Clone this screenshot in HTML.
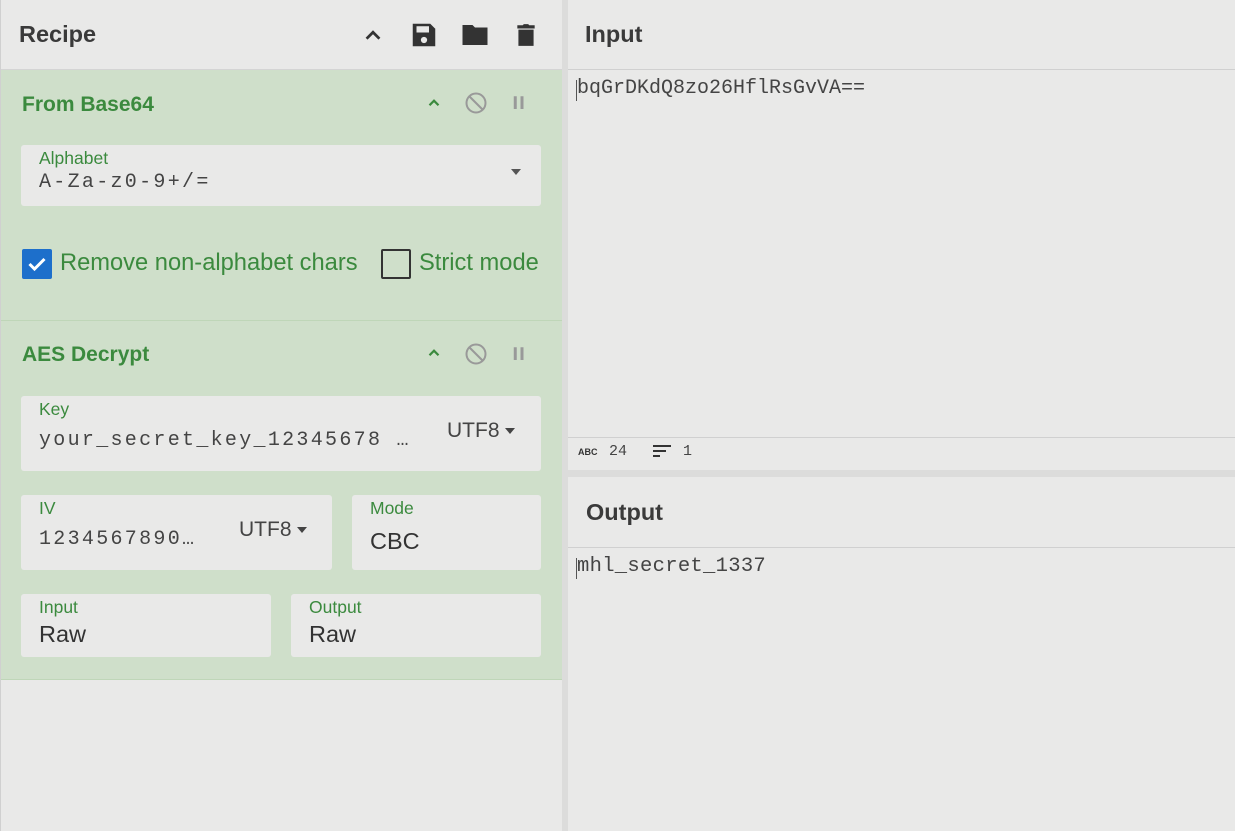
<!DOCTYPE html>
<html><head><style>
*{box-sizing:border-box;margin:0;padding:0}
body{width:1235px;height:831px;background:#e9e9e8;font-family:"Liberation Sans",sans-serif;position:relative;overflow:hidden;color:#333}
.a{position:absolute}
.h{font-weight:bold;font-size:23.5px;color:#3a3a3a}
.op{background:#cfdfca;border-bottom:1px solid #bfd6b8;left:1px;width:561px}
.t{color:#3b8a3e;font-weight:bold;font-size:21px}
.f{background:#e9e9e8;border-radius:3px}
.lab{font-size:17.5px;color:#3b8a3e;position:absolute;left:18px;top:3px}
.val{position:absolute;left:18px;font-family:"Liberation Mono",monospace;font-size:20px;letter-spacing:2.3px;color:#444}
.vs{position:absolute;left:18px;font-size:23.5px;color:#333}
.mono{font-family:"Liberation Mono",monospace;color:#444}
</style></head><body>
<div class="a" style="left:0;top:0;width:1px;height:831px;background:#d0d0d0"></div>
<div class="a" style="left:562px;top:0;width:6px;height:831px;background:#dcdcdb"></div>
<div class="a" style="left:1px;top:69px;width:561px;height:1px;background:#d4d4d4"></div>
<div class="a h" style="left:19px;top:21px">Recipe</div>
<svg class="a" style="left:362px;top:24px" width="22" height="22" viewBox="0 0 24 24"><path d="M5 16l7-7 7 7" fill="none" stroke="#333" stroke-width="3"/></svg>
<svg class="a" style="left:409px;top:20px" width="30" height="30" viewBox="0 0 24 24"><path d="M3 3h14l4 4v14H3z" fill="#333"/><rect x="6" y="5" width="10" height="5" fill="#e9e9e8"/><circle cx="12" cy="16" r="2.5" fill="#e9e9e8"/></svg>
<svg class="a" style="left:459px;top:20px" width="32" height="30" viewBox="0 0 24 24"><path d="M2 4h8l2 2h10v14H2z" fill="#333"/></svg>
<svg class="a" style="left:513px;top:20px" width="26" height="30" viewBox="0 0 24 24"><path d="M4 3h5l1-1h4l1 1h5v3H4zM5 7h14v15H5z" fill="#333"/></svg>

<div class="a op" style="top:70px;height:251px">
<div class="a t" style="left:21px;top:23px">From Base64</div>
<svg class="a" style="left:424px;top:24px" width="18" height="18" viewBox="0 0 24 24"><path d="M6 15l6-6 6 6" fill="none" stroke="#3b8a3e" stroke-width="3"/></svg>
<svg class="a" style="left:463px;top:21px" width="24" height="24" viewBox="0 0 24 24"><circle cx="12" cy="12" r="9.5" fill="none" stroke="#999" stroke-width="2"/><path d="M5 5l14 14" stroke="#999" stroke-width="2"/></svg>
<svg class="a" style="left:509px;top:24px" width="18" height="18" viewBox="0 0 24 24"><rect x="5" y="3" width="4" height="17" fill="#999"/><rect x="14" y="3" width="4" height="17" fill="#999"/></svg>
<div class="a f" style="left:20px;top:75px;width:520px;height:61px"><div class="lab">Alphabet</div><div class="val" style="top:26px">A-Za-z0-9+/=</div>
<div class="a" style="left:490px;top:24px;border:5px solid transparent;border-top:6px solid #555"></div></div>
<div class="a" style="left:21px;top:179px;width:30px;height:30px;background:#1d6fcb;border-radius:2px"><svg width="30" height="30" viewBox="0 0 24 24"><path d="M6 12l4 4 8-8" fill="none" stroke="#fff" stroke-width="2.4"/></svg></div>
<div class="a" style="left:59px;top:180px;font-size:23.7px;color:#3b8a3e">Remove non-alphabet chars</div>
<div class="a" style="left:380px;top:179px;width:30px;height:30px;border:2.5px solid #333;border-radius:2px"></div>
<div class="a" style="left:418px;top:180px;font-size:23.7px;color:#3b8a3e">Strict mode</div>
</div>

<div class="a op" style="top:321px;height:359px">
<div class="a t" style="left:21px;top:22px">AES Decrypt</div>
<svg class="a" style="left:424px;top:23px" width="18" height="18" viewBox="0 0 24 24"><path d="M6 15l6-6 6 6" fill="none" stroke="#3b8a3e" stroke-width="3"/></svg>
<svg class="a" style="left:463px;top:21px" width="24" height="24" viewBox="0 0 24 24"><circle cx="12" cy="12" r="9.5" fill="none" stroke="#999" stroke-width="2"/><path d="M5 5l14 14" stroke="#999" stroke-width="2"/></svg>
<svg class="a" style="left:509px;top:24px" width="18" height="18" viewBox="0 0 24 24"><rect x="5" y="3" width="4" height="17" fill="#999"/><rect x="14" y="3" width="4" height="17" fill="#999"/></svg>
<div class="a f" style="left:20px;top:75px;width:520px;height:75px"><div class="lab">Key</div><div class="val" style="top:33px">your_secret_key_12345678 …</div>
<div class="a" style="left:426px;top:23px;font-size:21px;color:#444">UTF8</div><div class="a" style="left:484px;top:32px;border:5px solid transparent;border-top:6px solid #444"></div></div>
<div class="a f" style="left:20px;top:174px;width:311px;height:75px"><div class="lab">IV</div><div class="val" style="top:33px">1234567890…</div>
<div class="a" style="left:218px;top:23px;font-size:21px;color:#444">UTF8</div><div class="a" style="left:276px;top:32px;border:5px solid transparent;border-top:6px solid #444"></div></div>
<div class="a f" style="left:351px;top:174px;width:189px;height:75px"><div class="lab">Mode</div><div class="vs" style="top:33px">CBC</div></div>
<div class="a f" style="left:20px;top:273px;width:250px;height:63px"><div class="lab">Input</div><div class="vs" style="top:27px">Raw</div></div>
<div class="a f" style="left:290px;top:273px;width:250px;height:63px"><div class="lab">Output</div><div class="vs" style="top:27px">Raw</div></div>
</div>

<div class="a h" style="left:585px;top:21px">Input</div>
<div class="a" style="left:568px;top:69px;width:667px;height:1px;background:#d0d0d0"></div>
<div class="a" style="left:576px;top:80px;width:1px;height:21px;background:#555"></div>
<div class="a mono" style="left:577px;top:77px;font-size:20px">bqGrDKdQ8zo26HflRsGvVA==</div>
<div class="a" style="left:568px;top:437px;width:667px;height:1px;background:#d0d0d0"></div>
<div class="a" style="left:578px;top:447px;font-size:9px;font-weight:bold;color:#333">ABC</div>
<div class="a mono" style="left:609px;top:443px;font-size:15px">24</div>
<svg class="a" style="left:652px;top:444px" width="20" height="16" viewBox="0 0 20 16"><path d="M1 2h18M1 7h13M1 12h7" stroke="#333" stroke-width="2"/></svg>
<div class="a mono" style="left:683px;top:443px;font-size:15px">1</div>
<div class="a" style="left:568px;top:470px;width:667px;height:7px;background:#dcdcdb"></div>
<div class="a h" style="left:586px;top:499px">Output</div>
<div class="a" style="left:568px;top:547px;width:667px;height:1px;background:#d0d0d0"></div>
<div class="a" style="left:576px;top:558px;width:1px;height:21px;background:#555"></div>
<div class="a mono" style="left:577px;top:555px;font-size:20.5px;letter-spacing:0.3px">mhl_secret_1337</div>
</body></html>
